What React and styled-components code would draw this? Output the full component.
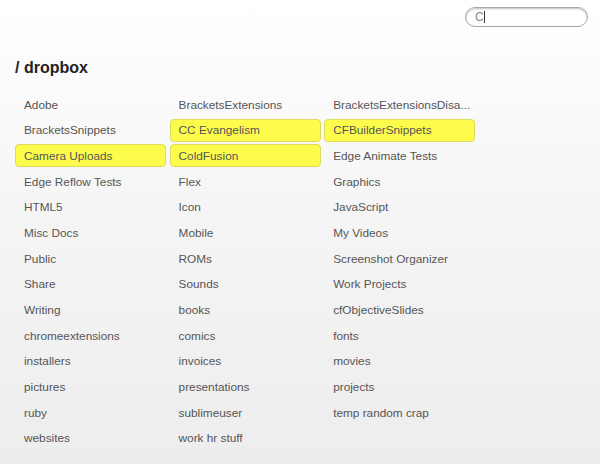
import styled, { createGlobalStyle } from "styled-components";

const GlobalStyle = createGlobalStyle`
  html, body {
    margin: 0;
    padding: 0;
  }
  body {
    font-family: "Liberation Sans", Arial, sans-serif;
  }
`

// long names are shortened the way the listing shows them
const folders = [
    'Adobe', 'BracketsExtensions', 'BracketsExtensionsDisa...',
    'BracketsSnippets', 'CC Evangelism', 'CFBuilderSnippets',
    'Camera Uploads', 'ColdFusion', 'Edge Animate Tests',
    'Edge Reflow Tests', 'Flex', 'Graphics',
    'HTML5', 'Icon', 'JavaScript',
    'Misc Docs', 'Mobile', 'My Videos',
    'Public', 'ROMs', 'Screenshot Organizer',
    'Share', 'Sounds', 'Work Projects',
    'Writing', 'books', 'cfObjectiveSlides',
    'chromeextensions', 'comics', 'fonts',
    'installers', 'invoices', 'movies',
    'pictures', 'presentations', 'projects',
    'ruby', 'sublimeuser', 'temp random crap',
    'websites', 'work hr stuff',
]

const query = 'C'

export default function App() {
    return <>
        <GlobalStyle/>
        <Page>
            <TopBar>
                <SearchBox>
                    <SearchText>{query}</SearchText>
                    <Caret/>
                </SearchBox>
            </TopBar>
            <Title>/ dropbox</Title>
            <Grid>
                {folders.map(name =>
                    <Item key={name} $hit={name.startsWith(query)}>
                        <Label>{name}</Label>
                    </Item>
                )}
            </Grid>
        </Page>
    </>
}

const Page = styled.div`
  width: 600px;
  height: 464px;
  box-sizing: border-box;
  overflow: hidden;
  padding: 7px 12px 0 15px;
  background: linear-gradient(to bottom, #ffffff 0%, #f6f5f5 45%, #eeeded 100%);
`

const TopBar = styled.div`
  display: flex;
  justify-content: flex-end;
`

const SearchBox = styled.div`
  width: 123px;
  height: 20px;
  box-sizing: border-box;
  border: 1px solid #a9a9a9;
  border-radius: 10px;
  background: #fff;
  box-shadow: inset 0 1px 2px rgba(0, 0, 0, 0.25);
  display: flex;
  align-items: center;
  padding-left: 9px;
`

const SearchText = styled.span`
  font-size: 12px;
  color: #888;
  line-height: 12px;
`

const Caret = styled.span`
  width: 1px;
  height: 12px;
  background: #333;
`

const Title = styled.h1`
  margin: 31px 0 0 0;
  font-size: 16px;
  font-weight: bold;
  color: #222;
  line-height: 20px;
`

const Grid = styled.div`
  margin-top: 15px;
  display: grid;
  grid-template-columns: repeat(3, 151px);
  grid-auto-rows: 23px;
  column-gap: 3.6px;
  row-gap: 2.7px;
`

const Item = styled.div`
  box-sizing: border-box;
  display: flex;
  align-items: center;
  padding: 0 2px 0 8px;
  border-radius: 4px;
  min-width: 0;
  background: ${props => props.$hit ? '#fdfc4c' : 'transparent'};
  border: 1px solid ${props => props.$hit ? '#dcdb5c' : 'transparent'};
`

const Label = styled.span`
  font-size: 11.8px;
  color: #555;
  white-space: nowrap;
`
